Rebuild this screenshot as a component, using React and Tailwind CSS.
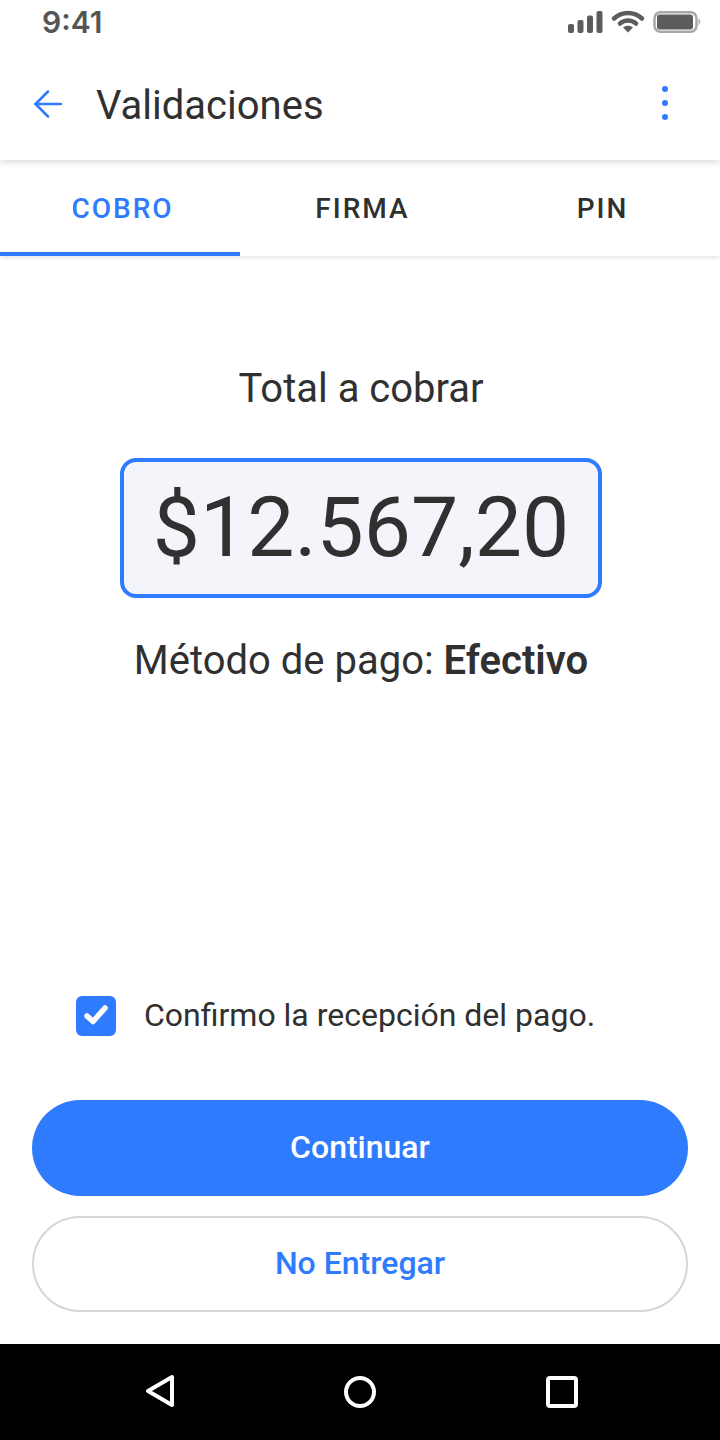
import React from 'react'

const roboto = { fontFamily: 'Roboto, sans-serif' }

function StatusIcons() {
  return (
    <svg width="134" height="26" viewBox="0 0 134 26" fill="none">
      <rect x="0" y="15" width="6" height="9" rx="2" fill="#5c5c5c" />
      <rect x="9.5" y="11" width="6" height="13" rx="2" fill="#5c5c5c" />
      <rect x="19" y="6.500" width="6" height="17.500" rx="2" fill="#5c5c5c" />
      <rect x="28.5" y="2" width="6" height="22" rx="2" fill="#5c5c5c" />
      <path d="M46 9.5C54 2 66 2 74 9.500" stroke="#5c5c5c" strokeWidth="4.500" strokeLinecap="round" />
      <path d="M52 14.500C56.500 10.500 63.500 10.500 68 14.500" stroke="#5c5c5c" strokeWidth="4.500" strokeLinecap="round" />
      <path d="M55 18.500L60 23.500L65 18.500C62 16 58 16 55 18.500Z" fill="#5c5c5c" />
      <rect x="86.500" y="3.250" width="42" height="19.500" rx="6" stroke="#a8a8a8" strokeWidth="2.500" />
      <rect x="89" y="5.500" width="36" height="15" rx="3" fill="#5c5c5c" />
      <path d="M130.500 9.500C133 10.500 133 15 130.500 16Z" fill="#b5b5b5" />
    </svg>
  )
}

function Tab({ label, active }) {
  return (
    <div
      className={`flex-1 h-full flex items-center justify-center pl-[5px] pt-[6px] text-[28px] font-medium tracking-[2px] border-b-4 ${
        active ? 'text-[#2e7bfd] border-[#2e7bfd]' : 'text-[#303030] border-transparent'
      }`}
    >
      {label}
    </div>
  )
}

export default function App() {
  return (
    <div className="w-[720px] h-[1440px] bg-white flex flex-col overflow-hidden" style={roboto}>
      {/* status bar + app bar */}
      <div className="h-[160px] shrink-0 flex flex-col shadow-[0_1px_8px_rgba(0,0,0,0.18)] relative z-20 bg-white">
        <div className="h-[44px] flex items-center justify-between pl-[42px] pr-[18px]">
          <span className="text-[30px] font-semibold text-[#555555] leading-none" style={{ fontFamily: 'Inter, sans-serif' }}>
            9:41
          </span>
          <StatusIcons />
        </div>
        <div className="flex-1 flex items-center pl-[32px] pr-[52px] pt-[6px]">
          <svg width="30" height="30" viewBox="0 0 30 30" fill="none" stroke="#2e7bfd" strokeWidth="2.500" strokeLinecap="round" strokeLinejoin="round">
            <path d="M28.800 14H3.500" />
            <path d="M16 1.500L3.500 14L16 26.500" />
          </svg>
          <h1 className="ml-[34px] mt-[2px] text-[40px] leading-none text-[#303030] font-normal">Validaciones</h1>
          <div className="ml-auto mb-[4px] flex flex-col gap-[8px]">
            <span className="w-[6px] h-[6px] rounded-full bg-[#2e7bfd]" />
            <span className="w-[6px] h-[6px] rounded-full bg-[#2e7bfd]" />
            <span className="w-[6px] h-[6px] rounded-full bg-[#2e7bfd]" />
          </div>
        </div>
      </div>

      {/* tabs */}
      <div className="h-[96px] shrink-0 flex shadow-[0_1px_5px_rgba(0,0,0,0.14)] relative z-10 bg-white">
        <Tab label="COBRO" active />
        <Tab label="FIRMA" />
        <Tab label="PIN" />
      </div>

      {/* content */}
      <div className="flex-1 flex flex-col text-[#303030]">
        <div className="pt-[109px] pl-[2px] flex flex-col items-center">
          <p className="text-[40px] leading-[48px]">Total a cobrar</p>
          <div className="mt-[45px] w-[482px] h-[140px] rounded-[16px] border-4 border-[#2e7bfd] bg-[#f3f5fb] flex items-center justify-center text-[84px] leading-none">
            $12.567,20
          </div>
          <p className="mt-[40px] text-[40px] leading-[46px]">
            Método de pago: <span className="font-semibold">Efectivo</span>
          </p>
        </div>

        <div className="mt-auto w-full px-[32px] pb-[32px] flex flex-col">
          <label className="flex items-center pl-[44px] gap-[28px] mb-[64px]">
            <span className="w-[40px] h-[40px] rounded-[6px] bg-[#2e7bfd] flex items-center justify-center">
              <svg width="26" height="22" viewBox="0 0 26 22" fill="none" stroke="#fff" strokeWidth="5.500" strokeLinecap="round" strokeLinejoin="round">
                <path d="M4 11L10 16.500L22 3" />
              </svg>
            </span>
            <span className="text-[32px] leading-[40px] -translate-y-[1px]">Confirmo la recepción del pago.</span>
          </label>
          <button className="h-[96px] pb-[3px] rounded-full bg-[#2e7bfd] text-white text-[32px] font-medium">Continuar</button>
          <button className="mt-[20px] h-[96px] pb-[3px] rounded-full border-2 border-[#d6d6d6] bg-white text-[#2e7bfd] text-[32px] font-medium">
            No Entregar
          </button>
        </div>
      </div>

      {/* android nav */}
      <div className="h-[96px] shrink-0 bg-black flex items-center justify-between pl-[144px] pr-[142px]">
        <svg width="32" height="36" viewBox="0 0 32 36" fill="none" stroke="#fff" strokeWidth="4" strokeLinejoin="round">
          <path d="M28 3V31L4 17Z" />
        </svg>
        <svg className="-ml-[2px]" width="32" height="32" viewBox="0 0 32 32" fill="none" stroke="#fff" strokeWidth="4">
          <circle cx="16" cy="16" r="14" />
        </svg>
        <svg width="32" height="32" viewBox="0 0 32 32" fill="none" stroke="#fff" strokeWidth="4" strokeLinejoin="round">
          <rect x="2" y="2" width="28" height="28" rx="2" />
        </svg>
      </div>
    </div>
  )
}
